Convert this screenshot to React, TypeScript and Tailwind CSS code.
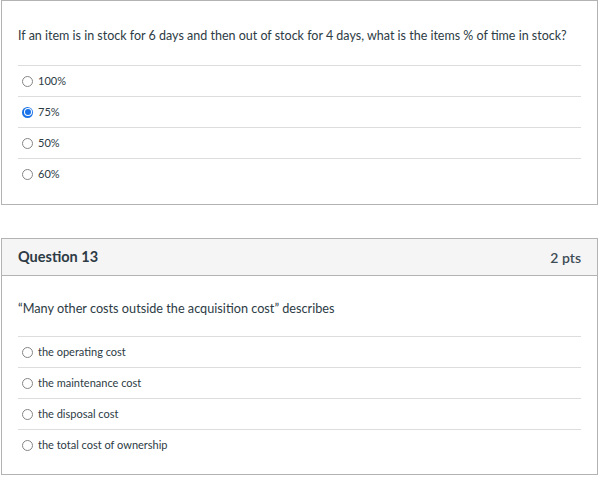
import React from 'react';

type Option = { label: string; checked?: boolean };

function Radio({ checked }: { checked?: boolean }) {
  if (checked) {
    return (
      <span className="flex h-[11px] w-[11px] items-center justify-center rounded-full bg-[#1a73e8]">
        <span className="flex h-[8px] w-[8px] items-center justify-center rounded-full bg-white">
          <span className="h-[6px] w-[6px] rounded-full bg-[#1a73e8]" />
        </span>
      </span>
    );
  }
  return <span className="h-[11px] w-[11px] rounded-full border border-[#858585] bg-white" />;
}

function Answers({ options }: { options: Option[] }) {
  return (
    <div className="flex flex-col">
      {options.map((o) => (
        <div key={o.label} className="flex h-[31px] items-center border-t border-[#dddddd] pl-[4px]">
          <Radio checked={o.checked} />
          <span className="ml-[5px] text-[11px] text-[#2d3b45]">{o.label}</span>
        </div>
      ))}
    </div>
  );
}

export default function App() {
  const q12: Option[] = [
    { label: '100%' },
    { label: '75%', checked: true },
    { label: '50%' },
    { label: '60%' },
  ];
  const q13: Option[] = [
    { label: 'the operating cost' },
    { label: 'the maintenance cost' },
    { label: 'the disposal cost' },
    { label: 'the total cost of ownership' },
  ];

  return (
    <div className="min-h-[480px] bg-white font-['Lato','Liberation_Sans',sans-serif] text-[#2d3b45]">
      <div className="ml-[1px] w-[597px] border border-[#b3b3b3] px-4 pt-[26px] pb-[15px]">
        <p className="mb-[20px] text-[12.5px] leading-[18px]">
          If an item is in stock for 6 days and then out of stock for 4 days, what is the items % of time in stock?
        </p>
        <Answers options={q12} />
      </div>

      <div className="mt-[33px] ml-[1px] w-[597px] border border-[#b3b3b3]">
        <div className="flex h-[37px] items-center justify-between border-b border-[#b3b3b3] bg-[#f5f5f5] px-4">
          <span className="text-[14.5px] font-bold">Question 13</span>
          <span className="text-[14px] font-semibold text-[#3d4b55]">2 pts</span>
        </div>
        <div className="px-4 pt-[23px] pb-[14px]">
          <p className="mb-[19px] text-[12.7px] leading-[18px]">
            “Many other costs outside the acquisition cost” describes
          </p>
          <Answers options={q13} />
        </div>
      </div>
    </div>
  );
}
